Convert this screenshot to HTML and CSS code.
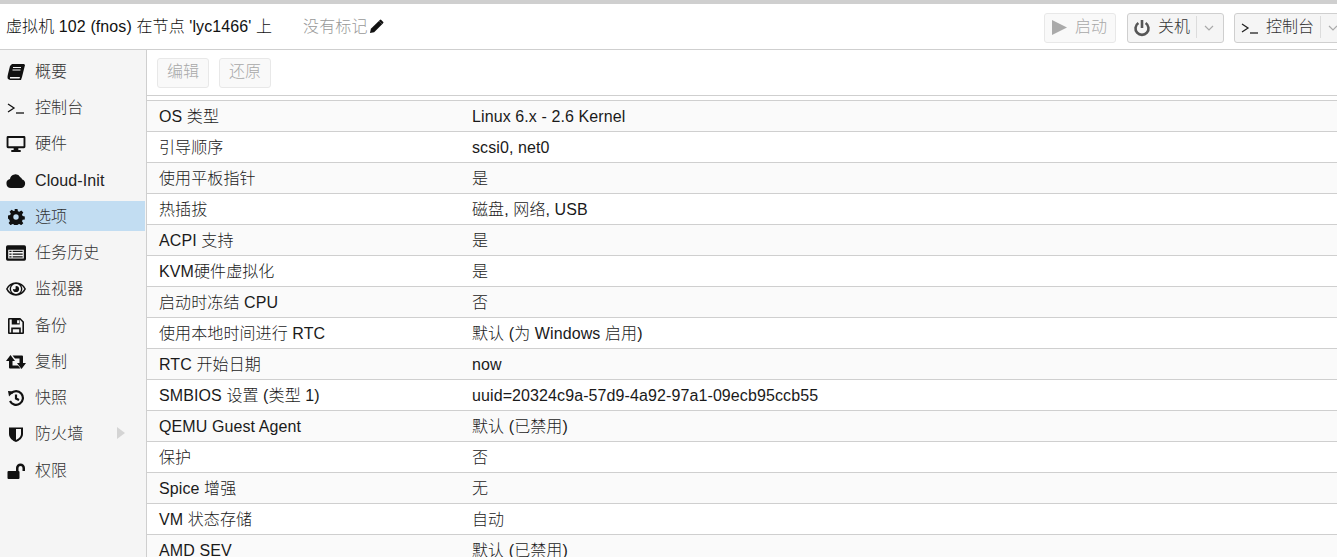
FILE: index.html
```html
<!DOCTYPE html>
<html lang="zh">
<head>
<meta charset="utf-8">
<title>虚拟机 102</title>
<link rel="stylesheet" href="styles.css">
</head>
<body>
<header class="topbar">
  <div class="title">虚拟机 102 (fnos) 在节点 'lyc1466' 上</div>
  <div class="tags">没有标记<svg class="pencil" viewBox="0 0 16 16"><path d="M1 15l1-4.500L10.500 2 14 5.500 5.500 14z"/><path d="M11.500 1l1-.5 3 3-.5 1-1 1L10.500 2z"/></svg></div>
  <div class="actions">
    <button class="btn disabled start"><svg class="ico-play" viewBox="1 1 14 14"><path d="M1 1l14 7-14 7z"/></svg>启动</button>
    <button class="btn split"><svg class="ico-power" viewBox="0 0 16 16"><path d="M8 0v8" stroke-width="2.600"/><path d="M4.400 3a6.500 6.500 0 1 0 7.200 0" stroke-width="2.600"/></svg>关机<span class="sep"></span><svg class="chev" viewBox="0 0 10 6"><path d="M1 1l4 4 4-4"/></svg></button>
    <button class="btn split"><svg class="ico-term" viewBox="0 0 18 12"><path d="M1 2l6 4-6 4" /><path d="M9 11h8"/></svg>控制台<span class="sep"></span><svg class="chev" viewBox="0 0 10 6"><path d="M1 1l4 4 4-4"/></svg></button>
  </div>
</header>
<div class="main">
  <nav class="side">
    <a class="item"><svg class="ic" viewBox="0 0 18 16"><path d="M5 0h12l1 1-3 12-1 3H3L1 15q-1-1 0-5L3 2z"/><path fill="#f5f5f5" d="M6 3h8v1H6zM5.500 5.500h8v1h-8zM3 13h10l-.5 1.500H3z"/></svg>概要</a>
    <a class="item"><svg class="ic line" viewBox="0 0 18 12"><path d="M1 2l6 4-6 4"/><path d="M9 11h8"/></svg>控制台</a>
    <a class="item"><svg class="ic" viewBox="0 0 20 17"><path fill-rule="evenodd" d="M1.500 0h17A1.500 1.500 0 0 1 20 1.500v10a1.500 1.500 0 0 1-1.500 1.500H12.500v2H15v2H5v-2h2.500v-2H1.500A1.500 1.500 0 0 1 0 11.500v-10A1.500 1.500 0 0 1 1.500 0zM2 2v9h16V2z"/></svg>硬件</a>
    <a class="item"><svg class="ic" viewBox="0 0 20 14"><path d="M5 14a4.500 4.500 0 0 1-1-8.900A5.500 5.500 0 0 1 14.300 3.300 3 3 0 0 1 16 5.300 4.500 4.500 0 0 1 15.500 14z"/></svg><span class="lat">Cloud-Init</span></a>
    <a class="item selected"><svg class="ic" viewBox="0 0 16 16"><path fill-rule="evenodd" d="M6.500 0h3l.4 2.200 1.500.6L13.300 1.500l2 2.100-1.300 1.900.6 1.500 2.200.4v3l-2.200.4-.6 1.500 1.300 1.900-2.100 2-1.900-1.300-1.500.6-.4 2.200h-3l-.4-2.200-1.500-.6-1.900 1.300-2-2.100 1.300-1.900-.6-1.500L0 9.500v-3l2.200-.4.600-1.500L1.500 2.700l2.100-2 1.900 1.300 1.500-.6zM8 5.300a2.700 2.700 0 1 0 0 5.400 2.700 2.700 0 0 0 0-5.400z"/></svg>选项</a>
    <a class="item"><svg class="ic" viewBox="0 0 18 14"><path fill-rule="evenodd" d="M1.500 0h15A1.500 1.500 0 0 1 18 1.500v11a1.500 1.500 0 0 1-1.500 1.500h-15A1.500 1.500 0 0 1 0 12.500v-11A1.500 1.500 0 0 1 1.500 0zM2 4v8h14V4zM3 5h2v1H3zM6 5h9v1H6zM3 7.500h2v1H3zM6 7.500h9v1H6zM3 10h2v1H3zM6 10h9v1H6z"/></svg>任务历史</a>
    <a class="item"><svg class="ic" viewBox="0 0 18 12"><path fill-rule="evenodd" d="M0 6C2 2 5 0 9 0s7 2 9 6c-2 4-5 6-9 6S2 10 0 6zM9 1.500a4.500 4.500 0 1 0 0 9 4.500 4.500 0 0 0 0-9zM1.500 6c.8 1.400 1.800 2.500 3 3.300a5.500 5.500 0 0 1 0-6.600C3.300 3.500 2.300 4.600 1.500 6zM13.500 2.700a5.500 5.500 0 0 1 0 6.600c1.200-.8 2.200-1.900 3-3.300-.8-1.400-1.800-2.500-3-3.300zM9 3.200a2.800 2.800 0 1 1-2.800 2.800c0-.4 1.800.6 2.300 0 .6-.6-.4-2.800.5-2.800z"/></svg>监视器</a>
    <a class="item"><svg class="ic small" viewBox="0 0 15 15"><path fill-rule="evenodd" d="M1 0h10.500L15 3.500V14a1 1 0 0 1-1 1H1a1 1 0 0 1-1-1V1a1 1 0 0 1 1-1zM1.500 1.500v12h1.500V9h9v4.500h1.500V4l-2.500-2.500V6H3.500V1.500zM8.500 2h2v3h-2zM4.500 10.500v3h6v-3z"/></svg>备份</a>
    <a class="item"><svg class="ic" viewBox="0 0 20 14"><path d="M4.500 0L9 6H6.500v4.500H12l2.500 3H4a1 1 0 0 1-1-1V6H0zM6.500.5H16a1 1 0 0 1 1 1V8h3l-4.500 6L11 8h2.500V3.500H9z"/></svg>复制</a>
    <a class="item"><svg class="ic small line2" viewBox="0 0 16 16"><path d="M3 3.500a6.800 6.800 0 1 1-1 7.500"/><path d="M8 4.500V8.500l3 1.500"/><path class="fillp" d="M0 1l6 .5-5 5z"/></svg>快照</a>
    <a class="item"><svg class="ic shield" viewBox="0 0 14 16"><path fill-rule="evenodd" d="M0 1.500h14V8c0 4-4 7-7 8-3-1-7-4-7-8zM7 3v11c2-1 5-3 5-6V3z"/></svg>防火墙<svg class="arrow" viewBox="0 0 8 12"><path d="M0 0l8 6-8 6z"/></svg></a>
    <a class="item"><svg class="ic" viewBox="0 0 18 16"><path d="M1.500 8H9V5a4.500 4.500 0 0 1 9 0v3h-2.500V5a2 2 0 0 0-4 0v3a1 1 0 0 1 1 1v6a1 1 0 0 1-1 1h-10a1 1 0 0 1-1-1V9a1 1 0 0 1 1-1z"/></svg>权限</a>
  </nav>
  <section class="content">
    <div class="toolbar">
      <button class="btn disabled">编辑</button>
      <button class="btn disabled">还原</button>
    </div>
    <div class="table">
      <div class="row"><div class="k">OS 类型</div><div class="v">Linux 6.x - 2.6 Kernel</div></div>
      <div class="row"><div class="k">引导顺序</div><div class="v">scsi0, net0</div></div>
      <div class="row"><div class="k">使用平板指针</div><div class="v">是</div></div>
      <div class="row"><div class="k">热插拔</div><div class="v">磁盘, 网络, USB</div></div>
      <div class="row"><div class="k">ACPI 支持</div><div class="v">是</div></div>
      <div class="row"><div class="k">KVM硬件虚拟化</div><div class="v">是</div></div>
      <div class="row"><div class="k">启动时冻结 CPU</div><div class="v">否</div></div>
      <div class="row"><div class="k">使用本地时间进行 RTC</div><div class="v">默认 (为 Windows 启用)</div></div>
      <div class="row"><div class="k">RTC 开始日期</div><div class="v">now</div></div>
      <div class="row"><div class="k">SMBIOS 设置 (类型 1)</div><div class="v">uuid=20324c9a-57d9-4a92-97a1-09ecb95ccb55</div></div>
      <div class="row"><div class="k">QEMU Guest Agent</div><div class="v">默认 (已禁用)</div></div>
      <div class="row"><div class="k">保护</div><div class="v">否</div></div>
      <div class="row"><div class="k">Spice 增强</div><div class="v">无</div></div>
      <div class="row"><div class="k">VM 状态存储</div><div class="v">自动</div></div>
      <div class="row"><div class="k">AMD SEV</div><div class="v">默认 (已禁用)</div></div>
    </div>
  </section>
</div>
</body>
</html>
```
FILE: styles.css
```css
* { box-sizing: border-box; }
html, body { margin: 0; height: 100%; overflow: hidden; }
body {
  font-family: "Liberation Sans", "Noto Sans CJK SC", sans-serif;
  font-size: 16px;
  line-height: 18px;
  font-weight: 300;
  letter-spacing: 0.1px;
  color: #111;
  background: #fff;
  border-top: 4px solid #cfcfcf;
}
.topbar {
  height: 46px;
  display: flex;
  align-items: center;
  border-bottom: 1px solid #cfcfcf;
  padding: 0 0 0 6px;
}
.tags {
  margin-left: 31px;
  color: #999;
  display: flex;
  align-items: center;
}
.pencil { width: 15px; height: 15px; fill: #111; margin-left: 2px; }
.actions { margin-left: auto; display: flex; gap: 10px; width: 293px; overflow: hidden; flex: none; margin-top: 2px; }
.btn {
  height: 30px;
  display: inline-flex;
  align-items: center;
  flex: none;
  padding: 0 9px 2px;
  font: inherit;
  letter-spacing: 0;
  color: #333;
  background: #f5f5f5;
  border: 1px solid #cfcfcf;
  border-radius: 3px;
}
.btn svg { position: relative; top: 1px; }
.btn.disabled { color: #a8a8a8; background: #f9f9f9; border-color: #e8e8e8; }
.btn.start { padding: 0 8px 2px 7px; margin-right: 1px; }
.ico-play { width: 15px; height: 15px; fill: #aaa; margin-right: 8px; }
.ico-power { width: 16px; height: 16px; fill: none; stroke: #555; margin-right: 8px; overflow: visible; }
.ico-term { width: 18px; height: 12px; fill: none; stroke: #222; stroke-width: 1.300; margin-right: 7px; }
.sep { width: 1px; height: 22px; background: #dcdcdc; margin: 0 7px 0 6px; }
.chev { width: 10px; height: 6px; fill: none; stroke: #aaa; stroke-width: 1.200; }
.btn.split { padding: 0 9px 2px 6px; }
.main { display: flex; height: 507px; }
.side {
  width: 147px;
  flex: none;
  background: #f5f5f5;
  border-right: 1px solid #cfcfcf;
  padding-top: 5.75px;
  display: flex;
  flex-direction: column;
  gap: 6.25px;
}
.item {
  height: 30px;
  flex: none;
  display: flex;
  align-items: center;
  padding: 2px 0 0 6px;
  color: #333;
  position: relative;
  margin-right: 1px;
}
.item .lat { color: #222; }
.item.selected { background: #c2ddf2; }
.ic { width: 20px; height: 16px; fill: #111; margin-right: 9px; flex: none; }
.ic.line { fill: none; stroke: #111; stroke-width: 1.300; height: 12px; }
.ic.line2 { fill: none; stroke: #111; stroke-width: 2.200; }
.ic.line2 .fillp { fill: #111; stroke: none; }
.arrow { position: absolute; left: 117px; top: 9px; width: 8px; height: 12px; fill: #d4d4d4; }
.content { flex: 1; min-width: 0; }
.toolbar {
  height: 46px;
  display: flex;
  align-items: center;
  gap: 10px;
  padding-left: 10px;
  border-bottom: 1px solid #cfcfcf;
}
.table { margin-top: 4px; border-top: 1px solid #cfcfcf; }
.row {
  height: 31px;
  display: flex;
  align-items: center;
  border-bottom: 1px solid #cfcfcf;
  padding: 2px 0 0 12px;
  color: #1a1a1a;
}
.row:nth-child(odd) { background: #fafafa; }
.k { width: 313px; flex: none; }
```
